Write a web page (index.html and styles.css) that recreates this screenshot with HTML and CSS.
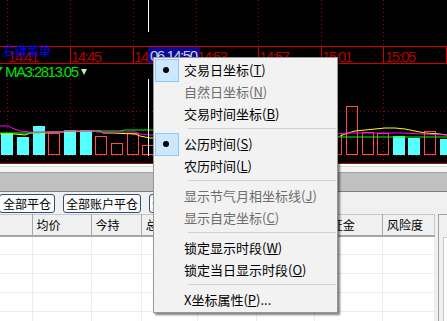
FILE: index.html
```html
<!DOCTYPE html>
<html lang="zh-CN">
<head>
<meta charset="UTF-8" />
<title>右键菜单 - X坐标</title>
<link rel="stylesheet" href="styles.css">
</head>
<body>
<div class="screen">
  <div class="chart">
    <svg class="kline" width="447" height="164" viewBox="0 0 447 164">
      <rect width="447" height="164" fill="#000"/>
      <!-- dotted grid -->
      <g stroke="#a00000" stroke-dasharray="1 3">
        <line x1="7.5" y1="0" x2="7.5" y2="46"/><line x1="7.5" y1="71" x2="7.5" y2="163"/>
        <line x1="70.5" y1="0" x2="70.5" y2="46"/><line x1="70.5" y1="71" x2="70.5" y2="163"/>
        <line x1="133.5" y1="0" x2="133.5" y2="46"/><line x1="133.5" y1="71" x2="133.5" y2="163"/>
        <line x1="196.5" y1="0" x2="196.5" y2="46"/><line x1="196.5" y1="71" x2="196.5" y2="163"/>
        <line x1="258.5" y1="0" x2="258.5" y2="46"/><line x1="258.5" y1="71" x2="258.5" y2="163"/>
        <line x1="321.5" y1="0" x2="321.5" y2="46"/><line x1="321.5" y1="71" x2="321.5" y2="163"/>
        <line x1="383.5" y1="0" x2="383.5" y2="46"/><line x1="383.5" y1="71" x2="383.5" y2="163"/>
        <line x1="0" y1="111.5" x2="447" y2="111.5"/>
        <line x1="0" y1="155.5" x2="447" y2="155.5"/>
      </g>
      <!-- volume bars -->
      <g fill="#55ffff">
        <rect x="1" y="133" width="12" height="22"/>
        <rect x="17" y="137" width="12" height="18"/>
        <rect x="33" y="126" width="12" height="29"/>
        <rect x="64" y="130" width="12" height="25"/>
        <rect x="80" y="130" width="12" height="25"/>
        <rect x="158" y="140" width="12" height="15"/>
        <rect x="189" y="128" width="12" height="27"/>
        <rect x="252" y="135" width="12" height="20"/>
        <rect x="393" y="136" width="12" height="19"/>
        <rect x="408" y="138" width="12" height="17"/>
        <rect x="440" y="139" width="12" height="16"/>
      </g>
      <g fill="none" stroke="#ff4b4b">
        <rect x="48.5" y="133.5" width="11" height="21"/>
        <rect x="95.5" y="136.5" width="11" height="18"/>
        <rect x="111.5" y="143.5" width="11" height="11"/>
        <rect x="127.5" y="133.5" width="11" height="21"/>
        <rect x="142.5" y="145.5" width="11" height="9"/>
        <rect x="330.5" y="133.5" width="11" height="21"/>
        <rect x="346.5" y="106.5" width="11" height="48"/>
        <rect x="362.5" y="132.5" width="11" height="22"/>
        <rect x="377.5" y="133.5" width="11" height="21"/>
        <rect x="424.5" y="131.5" width="11" height="23"/>
      </g>
      <!-- moving averages -->
      <polyline fill="none" stroke="#ffff00" points="0,134 15,134 25,135 30,133 47,133 50,132 63,132 100,131 103,133 113,133 135,134 140,136 150,138 338,137 345,134 355,131 365,130 375,129 385,128 395,128 405,129 415,131 425,133 440,134 447,135"/>
      <polyline fill="none" stroke="#00ff00" points="0,133 40,133 45,132 60,132 65,131 120,131 125,130 153,130 338,137 447,137"/>
      <polyline fill="none" stroke="#ff00ff" points="0,126 8,126 12,128 20,131 30,132 62,132 64,131 95,131 97,132 135,132 140,134 150,135 338,134 345,133 400,133 447,135"/>
      <!-- crosshair -->
      <line x1="148.5" y1="0" x2="148.5" y2="32" stroke="#fff"/>
      <line x1="148.5" y1="79" x2="148.5" y2="156" stroke="#fff"/>
      <!-- time axis -->
      <g stroke="#d00000">
        <line x1="0" y1="46.5" x2="447" y2="46.5"/>
        <line x1="0" y1="63.5" x2="447" y2="63.5"/>
        <line x1="70.5" y1="46" x2="70.5" y2="63"/>
        <line x1="133.5" y1="46" x2="133.5" y2="63"/>
        <line x1="196.5" y1="46" x2="196.5" y2="63"/>
        <line x1="258.5" y1="46" x2="258.5" y2="63"/>
        <line x1="321.5" y1="46" x2="321.5" y2="63"/>
        <line x1="383.5" y1="46" x2="383.5" y2="63"/>
        <line x1="446.5" y1="46" x2="446.5" y2="63"/>
      </g>
      <g class="axis-label" fill="#b00000">
        <text x="8" y="62" textLength="31">14:41</text>
        <text x="71" y="62" textLength="31">14:45</text>
        <text x="134" y="62" textLength="31">14:49</text>
        <text x="197" y="62" textLength="31">14:53</text>
        <text x="259" y="62" textLength="31">14:57</text>
        <text x="322" y="62" textLength="31">15:01</text>
        <text x="385" y="62" textLength="31">15:05</text>
      </g>
      <rect x="148" y="47" width="52" height="16" fill="#0a0a96"/>
      <text class="axis-label" x="150" y="61" textLength="48" fill="#c8d0f0">06 14:50</text>
      <text class="ma-label" x="5" y="77" textLength="74" fill="#00e000">MA3:2813.05</text>
      <polygon points="81,69 87,69 84,75" fill="#b8f0b8"/>
      <polygon points="0,67 3,67 0,71" fill="#00e000"/>
      <text class="hint" x="3" y="56" fill="#0000ff">右键菜单</text>
      <line x1="0" y1="163.5" x2="447" y2="163.5" stroke="#b00000"/>
    </svg>
  </div>

  <div class="splitter">
    <div class="splitter-top"></div>
    <div class="splitter-mid"></div>
    <div class="splitter-bar"></div>
  </div>

  <div class="trade">
    <div class="toolbar">
      <button class="btn first">全部平仓</button>
      <button class="btn">全部账户平仓</button>
      <button class="btn">全部撤单</button>
    </div>
    <div class="grid-area">
      <table class="pos-table">
        <colgroup>
          <col style="width:32px"><col style="width:59px"><col style="width:50px"><col style="width:56px">
          <col style="width:59px"><col style="width:58px"><col style="width:68px"><col style="width:52px">
        </colgroup>
        <thead>
          <tr><th></th><th>均价</th><th>今持</th><th>总持</th><th></th><th></th><th>保证金</th><th>风险度</th></tr>
        </thead>
        <tbody>
          <tr><td></td><td></td><td></td><td></td><td></td><td></td><td></td><td></td></tr>
          <tr><td></td><td></td><td></td><td></td><td></td><td></td><td></td><td></td></tr>
          <tr><td></td><td></td><td></td><td></td><td></td><td></td><td></td><td></td></tr>
          <tr><td></td><td></td><td></td><td></td><td></td><td></td><td></td><td></td></tr>
          <tr><td></td><td></td><td></td><td></td><td></td><td></td><td></td><td></td></tr>
        </tbody>
      </table>
      <div class="side-panel"><div class="side-inner"></div></div>
    </div>
  </div>

  <ul class="ctx-menu">
    <li class="item checked">交易日坐标(<u>T</u>)</li>
    <li class="item disabled">自然日坐标(<u>N</u>)</li>
    <li class="item">交易时间坐标(<u>B</u>)</li>
    <li class="sep"></li>
    <li class="item checked">公历时间(<u>S</u>)</li>
    <li class="item">农历时间(<u>L</u>)</li>
    <li class="sep"></li>
    <li class="item disabled">显示节气月相坐标线(<u>J</u>)</li>
    <li class="item disabled">显示自定坐标(<u>C</u>)</li>
    <li class="sep"></li>
    <li class="item">锁定显示时段(<u>W</u>)</li>
    <li class="item">锁定当日显示时段(<u>O</u>)</li>
    <li class="sep"></li>
    <li class="item">X坐标属性(<u>P</u>)...</li>
  </ul>
</div>
</body>
</html>
```

FILE: styles.css
```css
* {
  box-sizing: border-box;
}
body {
  margin: 0;
  background: #f0f0f0;
  font-family: "Noto Sans CJK SC", "Liberation Sans", sans-serif;
  overflow: hidden;
}

.screen {
  position: relative;
  width: 447px;
  height: 321px;
  overflow: hidden;
}

/* chart */
.kline {
  display: block;
}
.axis-label {
  font-family: "Liberation Sans", sans-serif;
  font-size: 15px;
}
.ma-label {
  font-family: "Liberation Sans", sans-serif;
  font-size: 15px;
}
.hint {
  font-family: "Noto Sans CJK SC", sans-serif;
  font-size: 12px;
}

/* splitter between chart and trade panel */
.splitter-top {
  height: 2px;
  background: #fff;
}
.splitter-mid {
  height: 6px;
  border-top: 1px solid #d9d9d9;
  background: #f5f5f5;
}
.splitter-bar {
  height: 20px;
  border-top: 1px solid #a0a0a0;
  border-bottom: 1px solid #808080;
  background: #c0c0c0;
}

/* trade panel */
.trade {
  background: #f0f0f0;
}
.toolbar {
  display: flex;
  gap: 8px;
  padding-top: 2px;
  margin-left: -1px;
  height: 22px;
}
.btn {
  height: 19px;
  padding: 0 2px;
  border: 1px solid #2d4f78;
  border-radius: 3px;
  background: #fbfbfb;
  font-family: "Noto Sans CJK SC", sans-serif;
  font-size: 12px;
  line-height: 16px;
  color: #000;
}
.btn.first {
  padding: 0 3px;
}

.grid-area {
  display: flex;
  align-items: flex-start;
}
.pos-table {
  width: 435px;
  table-layout: fixed;
  border-collapse: collapse;
  border-top: 1px solid #c8c8c8;
  border-right: 1px solid #c8c8c8;
  font-size: 12px;
}
.pos-table th {
  height: 21px;
  padding: 0 0 0 4px;
  font-weight: normal;
  text-align: left;
  line-height: 18px;
  background: #f0f0f0;
  border-right: 1px solid #a8a8a8;
  border-bottom: 2px solid #a5a5a5;
  white-space: nowrap;
  overflow: hidden;
}
.pos-table th:last-child {
  border-right: none;
}
.pos-table td {
  height: 19px;
  padding: 0;
  background: #fff;
  border-right: 1px solid #ececec;
  border-bottom: 1px solid #ececec;
}

.side-panel {
  flex: 1;
  margin-left: 3px;
  height: 120px;
  border-top: 1px solid #a0a0a0;
  border-left: 1px solid #a0a0a0;
  padding: 22px 0 0 4px;
  background: #f0f0f0;
}
.side-inner {
  height: 100%;
  border-left: 1px solid #c8c8c8;
  border-top: 1px solid #c8c8c8;
  background: #fff;
}

/* context menu */
.ctx-menu {
  position: absolute;
  left: 153px;
  top: 57px;
  width: 185px;
  margin: 0;
  padding: 1px;
  list-style: none;
  background: #f2f2f2;
  border: 1px solid #979797;
  box-shadow: 2px 2px 2px rgba(0, 0, 0, 0.5);
  font-size: 13px;
  color: #000;
}
.ctx-menu .item {
  position: relative;
  height: 22px;
  line-height: 22px;
  padding-left: 29px;
  white-space: nowrap;
}
.ctx-menu .item.disabled {
  color: #6d6d6d;
}
.ctx-menu .item.checked::before {
  content: "";
  position: absolute;
  left: 0;
  top: 0;
  width: 22px;
  height: 21px;
  background: #cce8ff;
  border: 1px solid #90c8f6;
}
.ctx-menu .item.checked::after {
  content: "";
  position: absolute;
  left: 8px;
  top: 8px;
  width: 6px;
  height: 6px;
  border-radius: 50%;
  background: #000;
}
.ctx-menu .sep {
  height: 8px;
  padding-top: 3px;
  margin-left: 33px;
}
.ctx-menu .sep::after {
  content: "";
  display: block;
  height: 1px;
  background: #d0d0d0;
}
```
